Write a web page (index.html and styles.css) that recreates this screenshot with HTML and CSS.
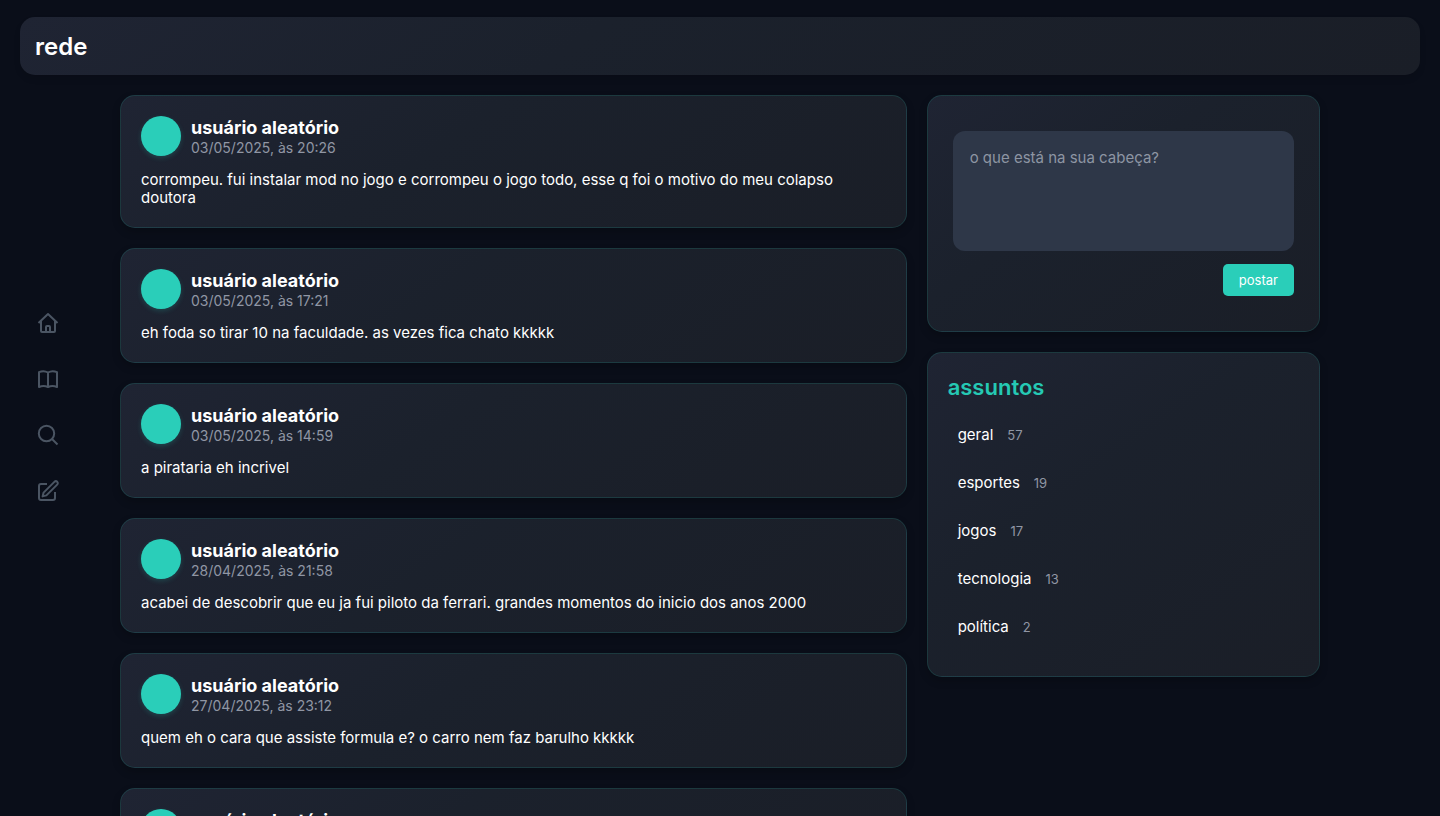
FILE: index.html
```html
<!DOCTYPE html>
<html lang="pt-BR">
<head>
    <meta charset="UTF-8">
    <meta name="viewport" content="width=device-width, initial-scale=1.0">
    <title>rede</title>
    <link rel="stylesheet" href="styles.css">
</head>
<body>
    <div class="page">
        <header class="topbar">
            <h1>rede</h1>
        </header>

        <aside class="sidebar">
            <nav class="menu">
                <a href="#" aria-label="início">
                    <svg viewBox="0 0 24 24"><path d="M2.500 12 12 3l9.500 9M5 10v10a1 1 0 0 0 1 1h12a1 1 0 0 0 1-1V10M10 21v-5a1 1 0 0 1 1-1h2a1 1 0 0 1 1 1v5"/></svg>
                </a>
                <a href="#" aria-label="assuntos">
                    <svg viewBox="0 0 24 24"><path d="M12 5.500C9.500 4 5.500 4 3 5.200V20c2.500-1.200 6.500-1.200 9 0 2.500-1.200 6.500-1.200 9 0V5.200C18.500 4 14.500 4 12 5.500ZM12 5.500V20"/></svg>
                </a>
                <a href="#" aria-label="buscar">
                    <svg viewBox="0 0 24 24"><circle cx="10.500" cy="10.500" r="7.700"/><path d="m16 16 5.500 5.500"/></svg>
                </a>
                <a href="#" aria-label="escrever">
                    <svg viewBox="0 0 24 24"><path d="M11 5H5a2 2 0 0 0-2 2v12a2 2 0 0 0 2 2h12a2 2 0 0 0 2-2v-6M18.600 2.600a2 2 0 0 1 2.800 2.800L10.400 16.400 6.600 17.400 7.600 13.600Z"/></svg>
                </a>
            </nav>
        </aside>

        <div class="content">
            <main class="feed">
                <article class="card">
                    <div class="post-header">
                        <div class="avatar"></div>
                        <div class="author">
                            <h2>usuário aleatório</h2>
                            <time>03/05/2025, às 20:26</time>
                        </div>
                    </div>
                    <p>corrompeu. fui instalar mod no jogo e corrompeu o jogo todo, esse q foi o motivo do meu colapso doutora</p>
                </article>
                <article class="card">
                    <div class="post-header">
                        <div class="avatar"></div>
                        <div class="author">
                            <h2>usuário aleatório</h2>
                            <time>03/05/2025, às 17:21</time>
                        </div>
                    </div>
                    <p>eh foda so tirar 10 na faculdade. as vezes fica chato kkkkk</p>
                </article>
                <article class="card">
                    <div class="post-header">
                        <div class="avatar"></div>
                        <div class="author">
                            <h2>usuário aleatório</h2>
                            <time>03/05/2025, às 14:59</time>
                        </div>
                    </div>
                    <p>a pirataria eh incrivel</p>
                </article>
                <article class="card">
                    <div class="post-header">
                        <div class="avatar"></div>
                        <div class="author">
                            <h2>usuário aleatório</h2>
                            <time>28/04/2025, às 21:58</time>
                        </div>
                    </div>
                    <p>acabei de descobrir que eu ja fui piloto da ferrari. grandes momentos do inicio dos anos 2000</p>
                </article>
                <article class="card">
                    <div class="post-header">
                        <div class="avatar"></div>
                        <div class="author">
                            <h2>usuário aleatório</h2>
                            <time>27/04/2025, às 23:12</time>
                        </div>
                    </div>
                    <p>quem eh o cara que assiste formula e? o carro nem faz barulho kkkkk</p>
                </article>
                <article class="card">
                    <div class="post-header">
                        <div class="avatar"></div>
                        <div class="author">
                            <h2>usuário aleatório</h2>
                        </div>
                    </div>
                </article>
            </main>

            <div class="side">
                <section class="card">
                    <form class="new-post">
                        <textarea aria-label="nova postagem" placeholder="o que está na sua cabeça?"></textarea>
                        <button type="button">postar</button>
                    </form>
                </section>
                <section class="card">
                    <h2 class="topics-title">assuntos</h2>
                    <ul class="topics">
                        <li><a href="#">geral</a><span>57</span></li>
                        <li><a href="#">esportes</a><span>19</span></li>
                        <li><a href="#">jogos</a><span>17</span></li>
                        <li><a href="#">tecnologia</a><span>13</span></li>
                        <li><a href="#">política</a><span>2</span></li>
                    </ul>
                </section>
            </div>
        </div>
    </div>
</body>
</html>
```
FILE: styles.css
```css
* {
    margin: 0;
    padding: 0;
    box-sizing: border-box;
}

html {
    scrollbar-width: none;
}

body {
    font-family: 'Inter', sans-serif;
    font-size: 15px;
    line-height: 18px;
    background: #0a0e19;
    color: #fff;
}

.page {
    display: grid;
    grid-template-columns: 100px minmax(0, 1fr);
    grid-template-rows: auto 1fr;
}

.topbar {
    grid-column: 1 / 3;
    grid-row: 1;
    margin: 17px 20px 20px;
    padding: 16px 15px 14px;
    border-radius: 15px;
    background: linear-gradient(145deg, #1f2433, #1b212c 40%, #1a1e27);
    box-shadow: 0 4px 6px rgba(0, 0, 0, 0.1);
}

.topbar h1 {
    font-size: 24px;
    line-height: 28px;
    font-weight: 600;
}

/* left menu, centered on the window */
.sidebar {
    grid-column: 1;
    grid-row: 1 / 3;
    position: sticky;
    top: 0;
    height: 100vh;
    padding: 0 0 2px 20px;
    display: flex;
    align-items: center;
    pointer-events: none;
}

.menu {
    display: flex;
    flex-direction: column;
    gap: 32px;
    padding: 20px 16px;
    border-radius: 15px;
    pointer-events: auto;
}

.menu a {
    display: block;
    height: 24px;
}

.menu svg {
    width: 24px;
    height: 24px;
    fill: none;
    stroke: #4b5563;
    stroke-width: 2;
    stroke-linejoin: round;
}

.content {
    grid-column: 2;
    grid-row: 2;
    display: grid;
    grid-template-columns: 2fr 1fr;
    gap: 20px;
    align-items: start;
    padding: 0 120px 20px 20px;
}

.feed,
.side {
    display: flex;
    flex-direction: column;
    gap: 20px;
}

.card {
    padding: 20px;
    border: 1px solid rgba(42, 206, 185, 0.15);
    border-radius: 15px;
    background: linear-gradient(145deg, #1f2433, #1b212c 40%, #1a1e27);
    box-shadow: 0 4px 8px rgba(0, 0, 0, 0.2);
}

.post-header {
    display: flex;
    gap: 10px;
    margin-bottom: 15px;
}

.avatar {
    width: 40px;
    height: 40px;
    border-radius: 50%;
    background: #2aceb9;
    box-shadow: 0 2px 5px rgba(42, 206, 185, 0.2);
}

.author h2 {
    font-size: 18px;
    line-height: 23px;
    font-weight: 700;
}

.author time {
    display: block;
    font-size: 14px;
    line-height: 17px;
    color: #9096a4;
}

.new-post {
    display: flex;
    flex-direction: column;
    align-items: flex-end;
    gap: 13px;
    padding: 15px 5px;
}

.new-post textarea {
    width: 100%;
    height: 120px;
    padding: 18px 17px;
    border: none;
    border-radius: 12px;
    resize: none;
    font: inherit;
    color: #fff;
    background: #2e3748;
}

.new-post textarea::placeholder {
    color: #8d95a3;
}

.new-post button {
    height: 32px;
    padding: 0 16px;
    border: none;
    border-radius: 5px;
    font-family: inherit;
    font-size: 13px;
    color: #fff;
    background: #2aceb9;
    cursor: pointer;
}

.topics-title {
    margin-bottom: 15px;
    font-size: 22px;
    line-height: 28px;
    font-weight: 600;
    color: #25c9b4;
}

.topics {
    list-style: none;
}

.topics li {
    display: flex;
    align-items: baseline;
    gap: 14px;
    margin-bottom: 10px;
    padding: 10px;
}

.topics a {
    color: #fff;
    text-decoration: none;
}

.topics span {
    font-size: 13px;
    color: #9096a4;
}
```
